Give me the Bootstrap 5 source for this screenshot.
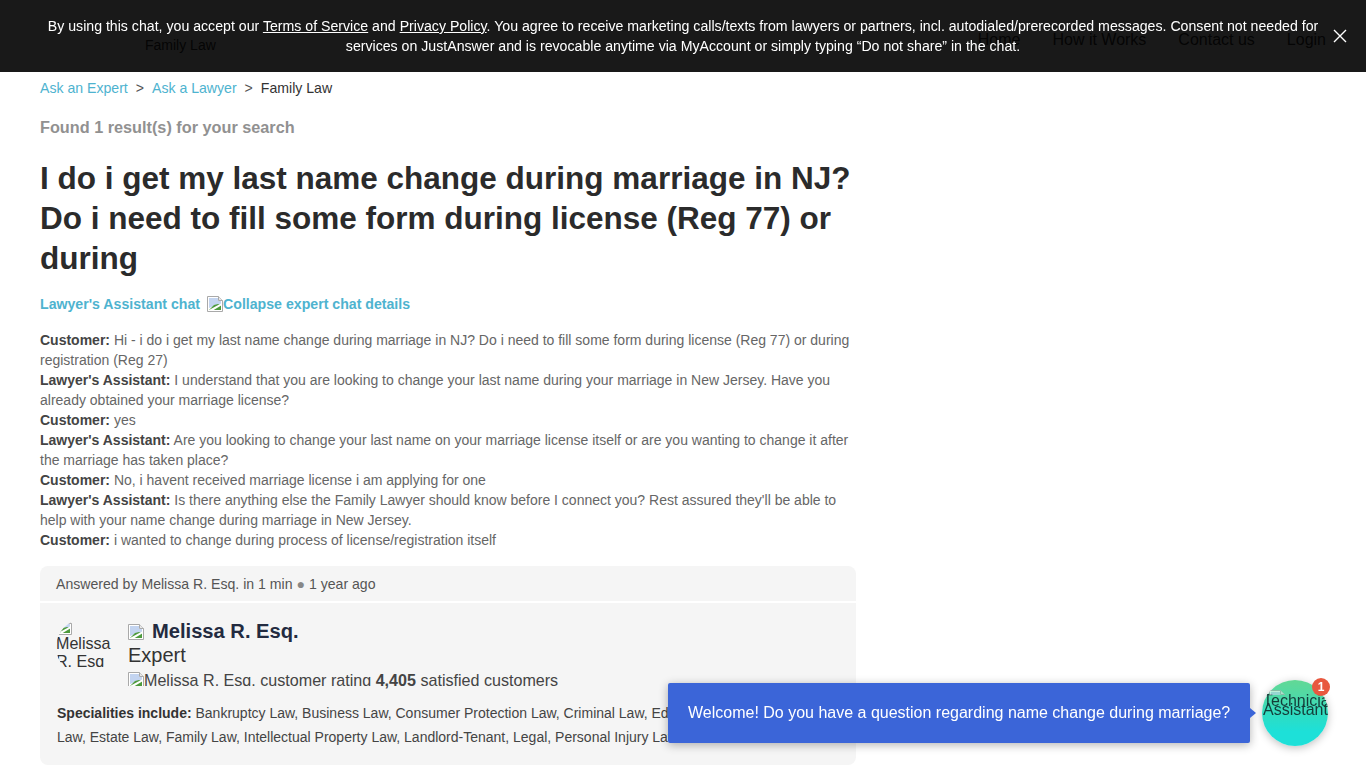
<!DOCTYPE html>
<html lang="en">
<head>
    <meta charset="UTF-8">
    <meta name="viewport" content="width=device-width, initial-scale=1.0">
    <title>Family Law</title>
    <link href="https://cdn.jsdelivr.net/npm/bootstrap@5.3.0/dist/css/bootstrap.min.css" rel="stylesheet">
    <style>
        body { font-family: "Liberation Sans", Arial, sans-serif; color: #333; overflow: hidden; height: 768px; }
        a { color: #4eb3cf; text-decoration: none; }
        .top-head { height: 72px; padding: 0 40px; }
        .top-logo { width: 170px; font-size: 14px; line-height: 16px; padding-top: 37px; padding-left: 105px; color: #333; white-space: nowrap; }
        .top-links { gap: 32px; font-size: 16px; padding-top: 28px; }
        .top-links a { color: #333; }
        .consent-bar { position: fixed; top: 0; left: 0; right: 0; height: 72px; background: rgba(0,0,0,.9); color: #fff; font-size: 14.15px; line-height: 20px; padding: 16px 45px 0; text-align: center; z-index: 10; }
        .consent-bar a { color: #fff; text-decoration: underline; }
        .consent-close { position: absolute; right: 19px; top: 29px; width: 14px; height: 14px; display: block; }
        .page-wrap { padding-left: 40px; width: 856px; }
        .crumbs { font-size: 14.1px; line-height: 20px; padding-top: 6px; gap: 8px; }
        .crumbs i { font-style: normal; color: #555; }
        .crumb-now { color: #333; }
        .found-txt { font-size: 16.25px; line-height: 20px; font-weight: 700; color: #919191; margin-top: 19px; }
        .q-title { font-size: 31.5px; line-height: 40px; font-weight: 700; color: #2b2b2b; margin: 21px 0 0; }
        .chat-toggle { font-size: 14.15px; line-height: 20px; font-weight: 700; margin-top: 16px; }
        .chat-toggle span { margin-right: 7px; }
        .chat-log { font-size: 14px; line-height: 20px; color: #666; margin-top: 16px; }
        .chat-log b { color: #444; }
        .answer-box { background: #f5f5f5; border-radius: 8px; margin-top: 16px; height: 199px; overflow: hidden; }
        .answer-head { height: 37px; font-size: 14.1px; line-height: 20px; padding: 8px 16px; color: #555; border-bottom: 2px solid #fff; }
        .answer-head i { font-style: normal; color: #888; }
        .answer-body { padding: 16px 16px 0; }
        .expert-pic { width: 56px; height: 56px; border-radius: 50%; overflow: hidden; flex: none; margin-right: 16px; }
        .expert-alt { height: 48px; overflow: hidden; font-size: 16.1px; line-height: 18px; color: #333; }
        .expert-alt svg { display: block; margin-bottom: -1px; }
        .expert-name { font-size: 20.15px; line-height: 24px; font-weight: 700; color: #232b40; }
        .expert-name svg { margin-right: 8px; vertical-align: -2px; }
        .expert-role { font-size: 20px; line-height: 24px; color: #333; }
        .expert-rate { font-size: 16.1px; line-height: 18px; color: #444; margin-top: 4px; white-space: nowrap; }
        .rate-alt { display: inline-block; height: 15px; overflow: hidden; vertical-align: top; }
        .rate-alt svg { vertical-align: -2px; }
        .spec-txt { font-size: 14px; line-height: 24px; color: #444; margin: 12px 0 0 1px; }
        .spec-txt b { color: #333; }
        .welcome-pop { position: fixed; left: 668px; top: 683px; width: 582px; height: 60px; background: #3b65d8; color: #fff; font-size: 16px; line-height: 59px; padding-left: 20px; border-radius: 2px; box-shadow: 0 2px 10px rgba(0,0,0,.3); white-space: nowrap; z-index: 5; }
        .welcome-pop::after { content: ""; position: absolute; right: -6px; top: 25px; border-left: 6px solid #3b65d8; border-top: 5px solid transparent; border-bottom: 5px solid transparent; }
        .tech-bubble { position: fixed; left: 1262px; top: 680px; width: 66px; height: 66px; border-radius: 50%; background: linear-gradient(180deg, #62d895 0%, #52d9a4 22%, #30dcc0 50%, #1de0d8 78%, #1de0d8 100%); box-shadow: 0 2px 8px rgba(0,0,0,.25); z-index: 5; }
        .tech-txt { width: 68px; height: 66px; overflow: hidden; font-size: 16px; line-height: 9px; color: #143d3a; padding-top: 10px; padding-left: 1px; white-space: nowrap; clip-path: circle(33.5px at 33px 33px); }
        .tech-mark { display: block; height: 5px; overflow: hidden; margin: 0 0 1px 6px; opacity: .6; }
        .tech-mark svg { display: block; }
        .tech-count { position: absolute; right: -2px; top: -2px; width: 18px; height: 18px; border-radius: 50%; background: #e8583f; color: #fff; font-size: 12px; font-weight: 700; line-height: 18px; text-align: center; }
    </style>
</head>
<body>
    <svg width="0" height="0" class="position-absolute">
        <symbol id="brokenImg" viewBox="0 0 16 16">
            <path d="M.5 .5h11l4 4v11H.5z" fill="#fff" stroke="#a9a9a9"/>
            <path d="M11.5 .5v4h4" fill="#e8e8e8" stroke="#a9a9a9"/>
            <path d="M2 2h9v3h3v3L2 12z" fill="#c3d4f0"/>
            <path d="M2 14l5-5 4-1 3 1v5z" fill="#4d9a3c"/>
            <path d="M1 14.5L15 7v2L5 15z" fill="#fff"/>
        </symbol>
    </svg>

    <div class="consent-bar">
        By using this chat, you accept our <a href="#">Terms of Service</a> and <a href="#">Privacy Policy</a>. You agree to receive marketing calls/texts from lawyers or partners, incl. autodialed/prerecorded messages. Consent not needed for services on JustAnswer and is revocable anytime via MyAccount or simply typing “Do not share” in the chat.
        <svg class="consent-close" viewBox="0 0 14 14"><path d="M1 1l12 12M13 1L1 13" stroke="#fff" stroke-width="1.4"/></svg>
    </div>

    <header class="top-head d-flex justify-content-between">
        <div class="top-logo">Family Law</div>
        <nav class="top-links d-flex">
            <a href="#">Home</a>
            <a href="#">How it Works</a>
            <a href="#">Contact us</a>
            <a href="#">Login</a>
        </nav>
    </header>

    <main class="page-wrap">
        <div class="crumbs d-flex">
            <a href="#">Ask an Expert</a><i>&gt;</i>
            <a href="#">Ask a Lawyer</a><i>&gt;</i>
            <span class="crumb-now">Family Law</span>
        </div>

        <div class="found-txt">Found 1 result(s) for your search</div>

        <h1 class="q-title">I do i get my last name change during marriage in NJ? Do i need to fill some form during license (Reg 77) or during</h1>

        <div class="chat-toggle">
            <a href="#"><span>Lawyer's Assistant chat</span><svg width="16" height="16" class="align-text-bottom"><use href="#brokenImg"/></svg>Collapse expert chat details</a>
        </div>

        <div class="chat-log">
            <b>Customer:</b> Hi - i do i get my last name change during marriage in NJ? Do i need to fill some form during license (Reg 77) or during registration (Reg 27)<br>
            <b>Lawyer's Assistant:</b> I understand that you are looking to change your last name during your marriage in New Jersey. Have you already obtained your marriage license?<br>
            <b>Customer:</b> yes<br>
            <b>Lawyer's Assistant:</b> Are you looking to change your last name on your marriage license itself or are you wanting to change it after the marriage has taken place?<br>
            <b>Customer:</b> No, i havent received marriage license i am applying for one<br>
            <b>Lawyer's Assistant:</b> Is there anything else the Family Lawyer should know before I connect you? Rest assured they'll be able to help with your name change during marriage in New Jersey.<br>
            <b>Customer:</b> i wanted to change during process of license/registration itself
        </div>

        <section class="answer-box">
            <div class="answer-head">Answered by Melissa R. Esq. in 1 min <i>●</i> 1 year ago</div>
            <div class="answer-body">
                <div class="d-flex">
                    <div class="expert-pic"><div class="expert-alt"><svg width="16" height="16"><use href="#brokenImg"/></svg>Melissa R. Esq</div></div>
                    <div>
                        <div class="expert-name"><svg width="16" height="16"><use href="#brokenImg"/></svg>Melissa R. Esq.</div>
                        <div class="expert-role">Expert</div>
                        <div class="expert-rate"><span class="rate-alt"><svg width="16" height="16"><use href="#brokenImg"/></svg>Melissa R. Esq. customer rating</span> <b>4,405</b> satisfied customers</div>
                    </div>
                </div>
                <div class="spec-txt"><b>Specialities include:</b> Bankruptcy Law, Business Law, Consumer Protection Law, Criminal Law, Education Law, Employment Law, Estate Law, Family Law, Intellectual Property Law, Landlord-Tenant, Legal, Personal Injury Law</div>
            </div>
        </section>
    </main>

    <div class="welcome-pop">Welcome! Do you have a question regarding name change during marriage?</div>
    <div class="tech-bubble">
        <div class="tech-txt"><span class="tech-mark"><svg width="16" height="16"><use href="#brokenImg"/></svg></span>Technician<br>Assistant</div>
        <span class="tech-count">1</span>
    </div>

    <script src="https://cdn.jsdelivr.net/npm/bootstrap@5.3.0/dist/js/bootstrap.bundle.min.js"></script>
</body>
</html>
